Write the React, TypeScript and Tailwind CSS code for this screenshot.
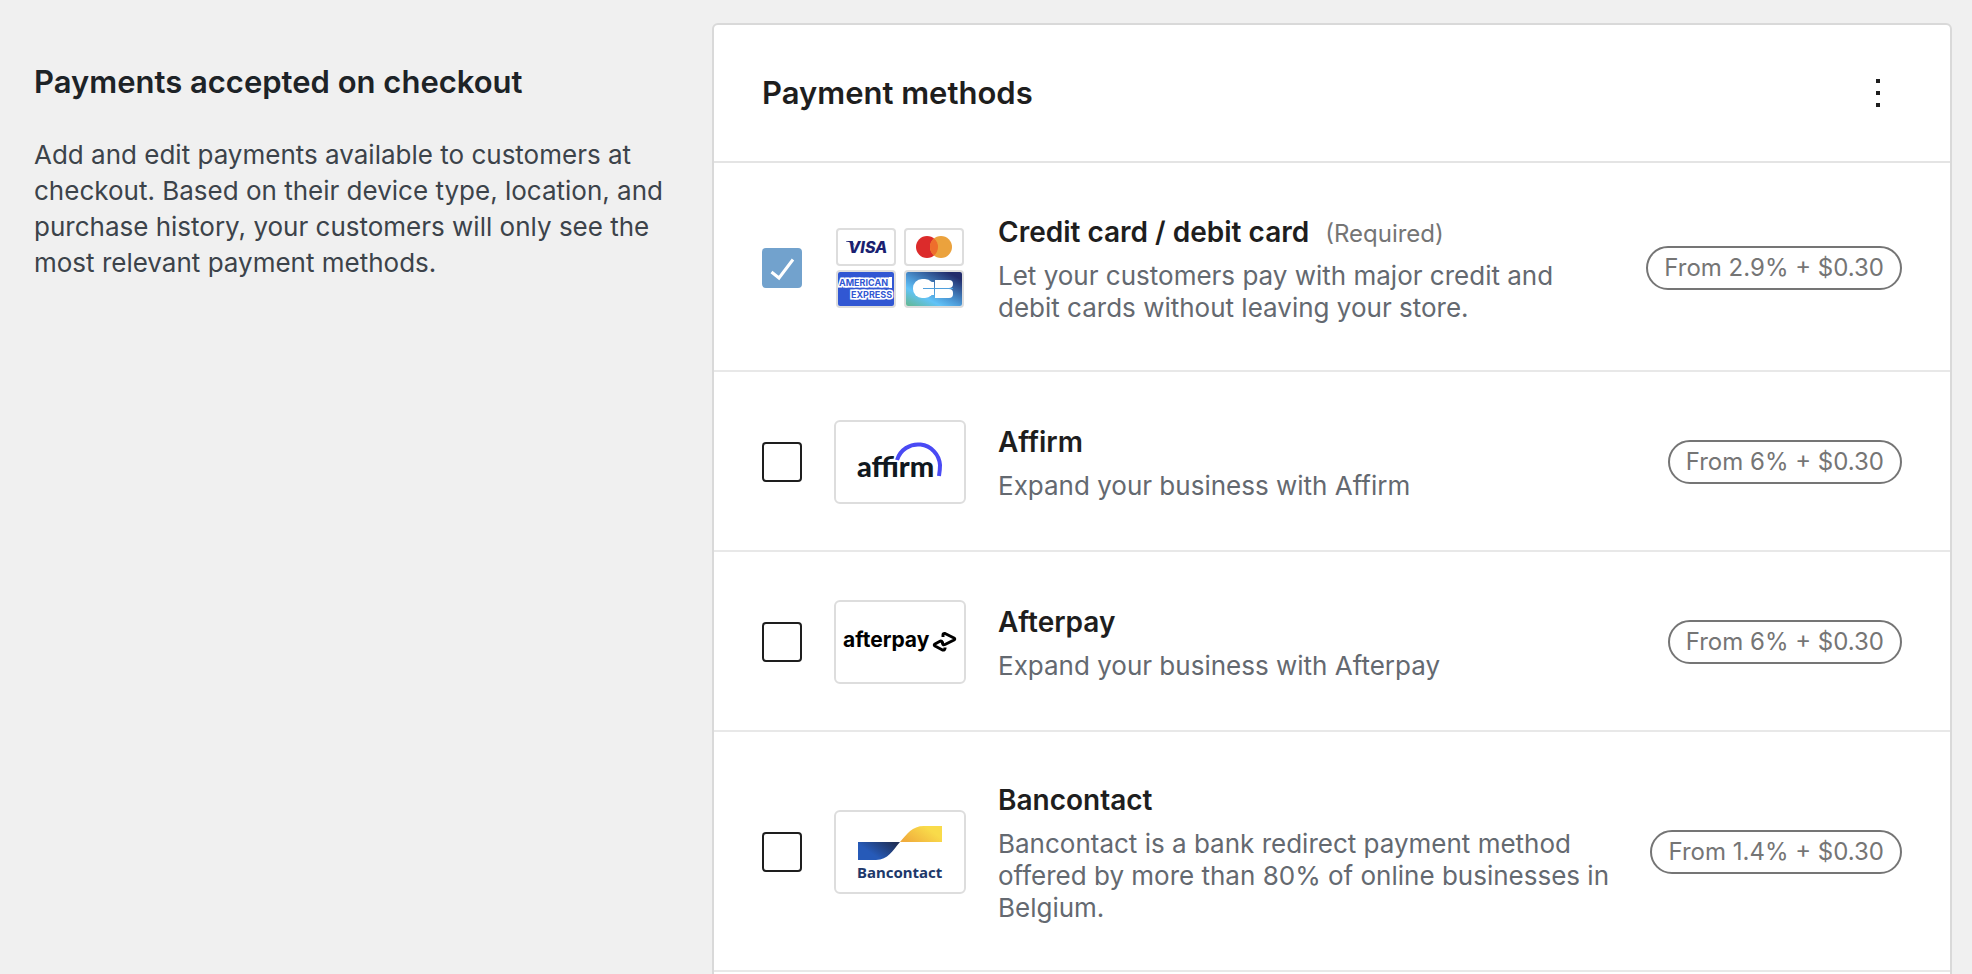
import React, { useState } from 'react';
import clsx from 'clsx';

interface PaymentMethod {
  id: string;
  name: string;
  description: string;
  fee: string;
  required?: boolean;
  logo: React.ReactNode;
}

const VisaLogo = () => (
  <svg viewBox="0 0 56 34" className="block h-full w-full">
    <path d="M8 11h6l3 5c-2-2.500-5-4-9-4.500z" fill="#1a1f71" />
    <text x="10" y="23" fontFamily="Inter, sans-serif" fontSize="16" fontWeight="800" fontStyle="italic" fill="#1a1f71">VISA</text>
  </svg>
);

const MastercardLogo = () => (
  <svg viewBox="0 0 56 34" className="block h-full w-full">
    <circle cx="21" cy="17" r="11" fill="#dc2b2b" />
    <circle cx="35" cy="17" r="11" fill="#eba23d" />
    <path d="M28 8.500a11 11 0 0 1 0 17a11 11 0 0 1 0-17z" fill="#ee6e2c" />
  </svg>
);

const AmexLogo = () => (
  <svg viewBox="0 0 56 34" className="block h-full w-full">
    <rect width="56" height="34" fill="#3157d3" />
    <rect x="51" y="5" width="3" height="11" fill="#fff" />
    <g fontFamily="Inter, sans-serif" fontSize="9" fontWeight="700" fill="#3157d3" stroke="#fff" strokeWidth="3" paintOrder="stroke">
      <text x="1" y="14">AMERICAN</text>
      <text x="13" y="26">EXPRESS</text>
    </g>
  </svg>
);

const CartesBancairesLogo = () => (
  <svg viewBox="0 0 56 34" className="block h-full w-full">
    <defs>
      <linearGradient id="cb" gradientUnits="userSpaceOnUse" x1="12" y1="38" x2="34" y2="-4">
        <stop offset="0" stopColor="#63b99c" />
        <stop offset="0.3" stopColor="#62c3f7" />
        <stop offset="0.5" stopColor="#4d9bd8" />
        <stop offset="1" stopColor="#222c6b" />
      </linearGradient>
    </defs>
    <rect width="56" height="34" fill="url(#cb)" />
    <rect x="7" y="7" width="21" height="19" rx="9" fill="#fff" />
    <rect x="18" y="10" width="10" height="13" fill="#fff" />
    <rect x="29" y="8" width="18" height="8" rx="4" fill="#fff" />
    <rect x="29" y="8" width="8" height="8" fill="#fff" />
    <rect x="29" y="17" width="18" height="9" rx="4" fill="#fff" />
    <rect x="29" y="17" width="8" height="9" fill="#fff" />
    <rect x="17" y="16" width="30" height="1" fill="#4f9fdc" />
  </svg>
);

const AffirmLogo = () => (
  <svg viewBox="0 0 128 80" className="block h-full w-full">
    <text x="21" y="55" fontFamily="Lato, sans-serif" fontSize="29" fontWeight="900" fill="#101820">affirm</text>
    <path d="M61 38a22 22 0 0 1 43 5c0 4-0.500 8-1 11" fill="none" stroke="#4a4af4" strokeWidth="4" />
  </svg>
);

const AfterpayLogo = () => (
  <svg viewBox="0 0 128 80" className="block h-full w-full">
    <text x="7" y="45" fontFamily="Inter, sans-serif" fontSize="21" fontWeight="700" fill="#000">afterpay</text>
    <path
      d="M107 35v-2q0-2 2-1.500l9 4.500q1.500 1 0 2l-9 4.500q-2 1-2.500-1v-1q-1-2-3-1l-4.500 2.500q-1.500 1 0 2l7.500 4q2 0.500 2.500-1.500v-1"
      fill="none"
      stroke="#000"
      strokeWidth="3"
      strokeLinejoin="round"
    />
  </svg>
);

const BancontactLogo = () => (
  <svg viewBox="0 0 128 80" className="block h-full w-full">
    <defs>
      <linearGradient id="bcBlue" x1="0.3" y1="0.6" x2="0.95" y2="0.2">
        <stop offset="0" stopColor="#265ab8" />
        <stop offset="1" stopColor="#20315a" />
      </linearGradient>
      <linearGradient id="bcYellow" x1="0.05" y1="0.8" x2="0.8" y2="0.4">
        <stop offset="0" stopColor="#f0ac3c" />
        <stop offset="1" stopColor="#f9db4a" />
      </linearGradient>
    </defs>
    <path d="M22 30h42c-7 8-12 18-24 18H22z" fill="url(#bcBlue)" />
    <path d="M106 30H64c7-8 12-16 24-16h18z" fill="url(#bcYellow)" />
    <text x="21" y="66" fontFamily="'Noto Sans', sans-serif" fontSize="15" fontWeight="700" fill="#20386a">Bancontact</text>
  </svg>
);

const cardLogos = [VisaLogo, MastercardLogo, AmexLogo, CartesBancairesLogo];

const CardLogos = () => (
  <div className="grid w-[132px] grid-cols-2 gap-x-2 gap-y-1 px-[2px]">
    {cardLogos.map((Logo, i) => (
      <div key={i} className="h-[38px] overflow-hidden rounded border-2 border-[#dddddd]">
        <Logo />
      </div>
    ))}
  </div>
);

const LogoBox = ({ children }: { children: React.ReactNode }) => (
  <div className="h-[84px] w-[132px] overflow-hidden rounded-md border-2 border-[#dddddd]">{children}</div>
);

const methods: PaymentMethod[] = [
  {
    id: 'card',
    name: 'Credit card / debit card',
    description: 'Let your customers pay with major credit and debit cards without leaving your store.',
    fee: 'From 2.9% + $0.30',
    required: true,
    logo: <CardLogos />,
  },
  {
    id: 'affirm',
    name: 'Affirm',
    description: 'Expand your business with Affirm',
    fee: 'From 6% + $0.30',
    logo: <LogoBox><AffirmLogo /></LogoBox>,
  },
  {
    id: 'afterpay',
    name: 'Afterpay',
    description: 'Expand your business with Afterpay',
    fee: 'From 6% + $0.30',
    logo: <LogoBox><AfterpayLogo /></LogoBox>,
  },
  {
    id: 'bancontact',
    name: 'Bancontact',
    description: 'Bancontact is a bank redirect payment method offered by more than 80% of online businesses in Belgium.',
    fee: 'From 1.4% + $0.30',
    logo: <LogoBox><BancontactLogo /></LogoBox>,
  },
];

interface MethodRowProps {
  method: PaymentMethod;
  checked: boolean;
  onToggle: () => void;
}

const MethodRow: React.FC<MethodRowProps> = ({ method, checked, onToggle }) => (
  <li className="flex items-center gap-8 border-b-2 border-[#e8e8e8] px-12 pt-12 pb-[46px]">
    <div className="grid shrink-0">
      <input
        id={method.id}
        type="checkbox"
        checked={checked}
        disabled={method.required}
        onChange={onToggle}
        className="col-start-1 row-start-1 h-10 w-10 appearance-none rounded border-2 border-[#1e1e1e] bg-white checked:border-[#72a2cd] checked:bg-[#72a2cd]"
      />
      <svg
        viewBox="0 0 40 40"
        className={clsx('pointer-events-none col-start-1 row-start-1 h-10 w-10', !checked && 'hidden')}
      >
        <path d="M9.500 24l7.500 6L31 11.500" fill="none" stroke="#fff" strokeWidth="3" />
      </svg>
    </div>
    <div className="shrink-0">{method.logo}</div>
    <div className="min-w-0 flex-1">
      <div className="mb-2 flex items-baseline gap-4 leading-10">
        <label htmlFor={method.id} className="text-[28px] font-semibold text-[#1e1e1e]">{method.name}</label>
        {method.required && <span className="text-[24px] leading-8 text-[#757575]">(Required)</span>}
      </div>
      <p className="text-[26px] leading-8 text-[#646970]">{method.description}</p>
    </div>
    <span className="flex h-11 shrink-0 items-center rounded-full border-2 border-[#757575] px-4 text-[24px] text-[#757575]">
      {method.fee}
    </span>
  </li>
);

export default function App() {
  const [enabled, setEnabled] = useState<string[]>(['card']);

  const toggle = (id: string) => {
    setEnabled(enabled.includes(id) ? enabled.filter(e => e !== id) : [...enabled, id]);
  };

  return (
    <div className="flex h-screen items-start overflow-hidden bg-[#f0f0f0] font-[Inter,sans-serif]">
      <section className="w-[712px] shrink-0 pt-[60px] pr-12 pl-[34px]">
        <h2 className="text-[31px] leading-11 font-semibold text-[#1d2327]">Payments accepted on checkout</h2>
        <p className="mt-[33px] text-[26px] leading-9 text-[#3c434a]">
          Add and edit payments available to customers at checkout. Based on their device type, location, and purchase
          history, your customers will only see the most relevant payment methods.
        </p>
      </section>

      <section className="mt-[23px] mr-5 min-w-0 flex-1 rounded-md border-2 border-[#d9d9d9] bg-white">
        <header className="flex h-[138px] items-center justify-between border-b-2 border-[#e4e4e4] px-12">
          <h2 className="text-[31px] leading-11 font-semibold text-[#1e1e1e]">Payment methods</h2>
          <button type="button" aria-label="Payment methods menu" className="flex h-12 w-12 items-center justify-center">
            <svg viewBox="0 0 24 24" className="h-12 w-12 fill-[#1e1e1e]">
              <path d="M13 19h-2v-2h2v2zm0-6h-2v-2h2v2zm0-6h-2V5h2v2z" />
            </svg>
          </button>
        </header>
        <ul className="pt-px pb-12">
          {methods.map(m => (
            <MethodRow key={m.id} method={m} checked={enabled.includes(m.id)} onToggle={() => toggle(m.id)} />
          ))}
        </ul>
      </section>
    </div>
  );
}
